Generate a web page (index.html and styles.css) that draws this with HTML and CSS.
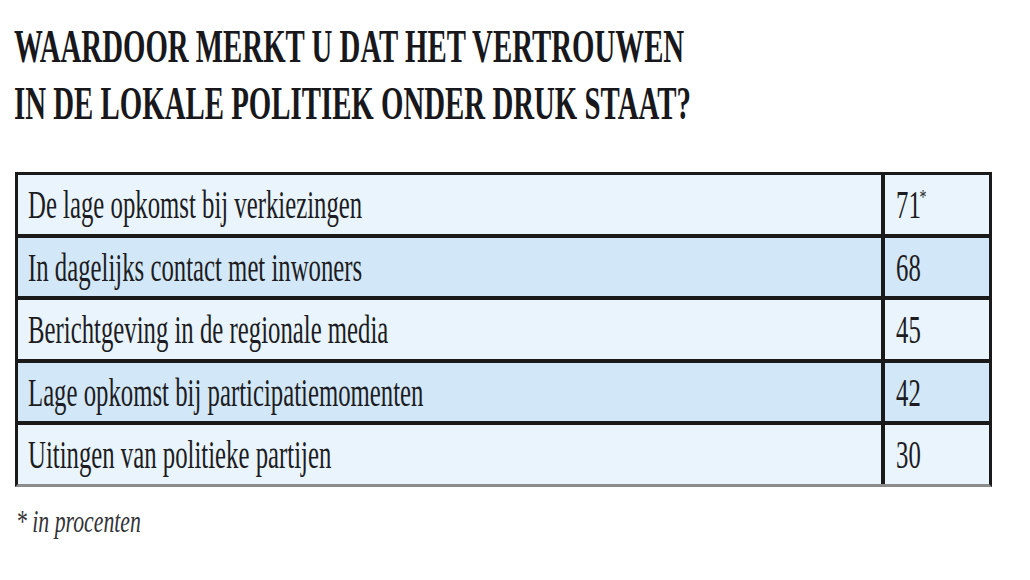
FILE: index.html
```html
<!DOCTYPE html>
<html lang="nl">
<head>
<meta charset="utf-8">
<title>Vertrouwen lokale politiek</title>
<link rel="stylesheet" href="styles.css">
</head>
<body>
<div class="page">
  <h1 class="title">
    <span class="title-line"><span class="squeeze">WAARDOOR MERKT U DAT HET VERTROUWEN</span></span>
    <span class="title-line"><span class="squeeze">IN DE LOKALE POLITIEK ONDER DRUK STAAT?</span></span>
  </h1>
  <div class="table">
    <div class="row light">
      <div class="label"><span class="squeeze">De lage opkomst bij verkiezingen</span></div>
      <div class="value"><span class="squeeze">71<sup class="star">*</sup></span></div>
    </div>
    <div class="row dark">
      <div class="label"><span class="squeeze">In dagelijks contact met inwoners</span></div>
      <div class="value"><span class="squeeze">68</span></div>
    </div>
    <div class="row light">
      <div class="label"><span class="squeeze">Berichtgeving in de regionale media</span></div>
      <div class="value"><span class="squeeze">45</span></div>
    </div>
    <div class="row dark">
      <div class="label"><span class="squeeze">Lage opkomst bij participatiemomenten</span></div>
      <div class="value"><span class="squeeze">42</span></div>
    </div>
    <div class="row light last">
      <div class="label"><span class="squeeze">Uitingen van politieke partijen</span></div>
      <div class="value"><span class="squeeze">30</span></div>
    </div>
  </div>
  <p class="note"><span class="squeeze">* in procenten</span></p>
</div>
</body>
</html>
```
FILE: styles.css
```css
html, body {
  margin: 0;
  padding: 0;
  background: #ffffff;
}

.page {
  width: 1030px;
  height: 580px;
  overflow: hidden;
  font-family: "Liberation Serif", "DejaVu Serif", serif;
  color: #1c1c22;
}

.squeeze {
  display: inline-block;
  white-space: nowrap;
  transform-origin: 0 50%;
}

.title {
  margin: 0;
  padding: 18px 0 0 14px;
  font-size: 46px;
  line-height: 57px;
  font-weight: bold;
  color: #18181c;
}

.title-line {
  display: block;
  height: 57px;
}

.title .squeeze {
  transform: scaleX(0.627);
}

.table {
  margin: 40px 0 0 15px;
  width: 977px;
  box-sizing: border-box;
  border-top: 3px solid #1a1a1a;
  border-left: 3px solid #1a1a1a;
  border-right: 3px solid #1a1a1a;
  border-bottom: 3px solid #8c8c8c;
}

.row {
  display: flex;
  height: 58.5px;
  border-bottom: 4px solid #1a1a1a;
}

.row.last {
  border-bottom: none;
}

.row.light {
  background: #e9f4fd;
}

.row.dark {
  background: #d2e7f7;
}

.label {
  flex: 1;
  padding: 2px 0 0 10px;
  font-size: 39px;
  line-height: 56px;
  border-right: 4px solid #1a1a1a;
  overflow: hidden;
}

.value {
  width: 93px;
  padding: 2px 0 0 11px;
  font-size: 39px;
  line-height: 56px;
}

.label .squeeze,
.value .squeeze {
  transform: scaleX(0.635);
}

.star {
  font-size: 22px;
  line-height: 0;
  vertical-align: 14px;
  margin-left: -2px;
}

.note {
  margin: 14px 0 0 16px;
  font-size: 32px;
  line-height: 40px;
  font-style: italic;
  color: #333338;
}

.note .squeeze {
  transform: scaleX(0.68);
}
```
